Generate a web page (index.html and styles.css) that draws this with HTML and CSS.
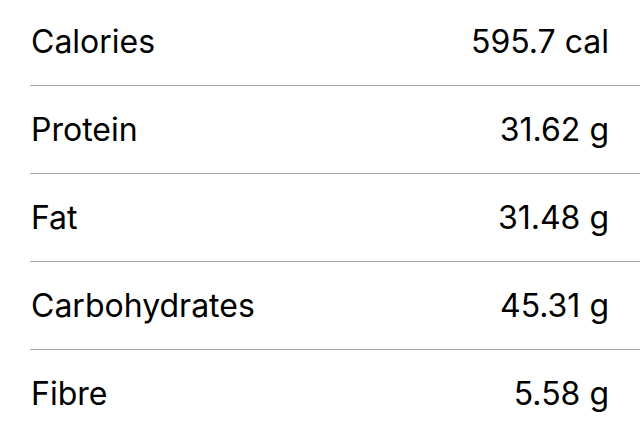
FILE: index.html
```html
<!DOCTYPE html>
<html>
<head>
<meta charset="utf-8">
<link rel="stylesheet" href="styles.css">
</head>
<body>
<ul class="list">
  <li class="row"><span class="label">Calories</span><span class="value">595.7 cal</span></li>
  <li class="row"><span class="label">Protein</span><span class="value">31.62 g</span></li>
  <li class="row"><span class="label">Fat</span><span class="value">31.48 g</span></li>
  <li class="row"><span class="label">Carbohydrates</span><span class="value">45.31 g</span></li>
  <li class="row"><span class="label">Fibre</span><span class="value">5.58 g</span></li>
</ul>
</body>
</html>
```
FILE: styles.css
```css
html, body {
  margin: 0;
  padding: 0;
  background: #ffffff;
}
body {
  font-family: Inter, "Liberation Sans", sans-serif;
  color: #000000;
  overflow: hidden;
}
.list {
  list-style: none;
  margin: -2px 0 0 0;
  padding: 0 0 0 30px;
}
.row {
  display: flex;
  justify-content: space-between;
  align-items: center;
  height: 87px;
  border-bottom: 1px solid #a9a9a9;
  padding-right: 31px;
  font-size: 32px;
  letter-spacing: 0;
}
.label {
  padding-left: 1px;
}
```
